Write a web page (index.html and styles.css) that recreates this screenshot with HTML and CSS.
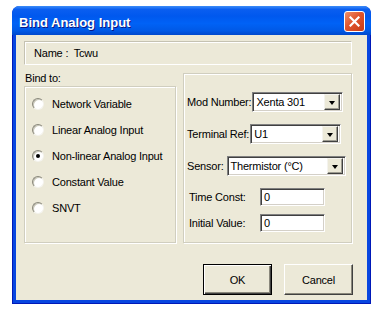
FILE: index.html
```html
<!DOCTYPE html>
<html lang="en">
<head>
    <meta charset="UTF-8">
    <title>Bind Analog Input</title>
    <link rel="stylesheet" href="styles.css">
</head>
<body>
    <div class="window">
        <div class="titlebar">
            <span class="title">Bind Analog Input</span>
            <span class="close">
                <svg width="11" height="11" viewBox="0 0 11 11"><path d="M1.5 1.5 L9.5 9.5 M9.5 1.5 L1.5 9.5" stroke="#fff" stroke-width="2.2" stroke-linecap="square"/></svg>
            </span>
        </div>
        <div class="client">
            <div class="name-box">Name :&nbsp; Tcwu</div>

            <div class="columns">
                <div class="bind-col">
                    <div class="caption">Bind to:</div>
                    <div class="group bind-group">
                        <div class="radio-row"><span class="radio"></span>Network Variable</div>
                        <div class="radio-row"><span class="radio"></span>Linear Analog Input</div>
                        <div class="radio-row"><span class="radio checked"></span>Non-linear Analog Input</div>
                        <div class="radio-row"><span class="radio"></span>Constant Value</div>
                        <div class="radio-row"><span class="radio"></span>SNVT</div>
                    </div>
                </div>

                <div class="group params">
                    <div class="combo-row">
                        <span class="lbl">Mod Number:</span>
                        <div class="combo combo-mod"><span class="value">Xenta 301</span><span class="drop"></span></div>
                    </div>
                    <div class="combo-row">
                        <span class="lbl">Terminal Ref:</span>
                        <div class="combo combo-mod"><span class="value">U1</span><span class="drop"></span></div>
                    </div>
                    <div class="combo-row">
                        <span class="lbl sensor-lbl">Sensor:</span>
                        <div class="combo combo-sensor"><span class="value">Thermistor (°C)</span><span class="drop"></span></div>
                    </div>
                    <div class="edit-row first-edit">
                        <span class="edit-lbl">Time Const:</span>
                        <div class="edit">0</div>
                    </div>
                    <div class="edit-row">
                        <span class="edit-lbl">Initial Value:</span>
                        <div class="edit">0</div>
                    </div>
                </div>
            </div>

            <div class="actions">
                <button class="btn btn-default">OK</button>
                <button class="btn">Cancel</button>
            </div>
        </div>
    </div>
</body>
</html>
```

FILE: styles.css
```css
/* XP style dialog */
body {
    margin: 0;
    background: #fff;
    font-family: 'Liberation Sans', Arial, sans-serif;
    font-size: 11px;
    letter-spacing: -0.2px;
    color: #000;
}

.window {
    margin: 6px 0 0 12px;
    width: 359px;
    height: 298px;
    box-sizing: border-box;
    background: #0846e0;
    border: 1px solid #0019b8;
    border-top: none;
    border-radius: 8px 8px 0 0;
    display: flex;
    flex-direction: column;
}

.titlebar {
    height: 29px;
    margin: 0 -1px;
    border-radius: 7px 7px 0 0;
    background: linear-gradient(#3c8cf8 0%, #0a5ef0 12%, #0058ee 35%, #0062f6 60%, #0059e6 85%, #0048cc 100%);
    display: flex;
    align-items: center;
    padding: 0 6px 0 7px;
}

.title {
    flex: 1;
    color: #fff;
    font-size: 13px;
    font-weight: bold;
    letter-spacing: 0;
    text-shadow: 1px 1px 0 #0a1883;
    padding-top: 3px;
}

.close {
    width: 19px;
    height: 19px;
    border: 1px solid #fff;
    border-radius: 3px;
    background: linear-gradient(135deg, #f0906a 0%, #e0552e 45%, #c73a14 100%);
    display: flex;
    align-items: center;
    justify-content: center;
    margin-top: 2px;
}

.client {
    flex: 1;
    margin: 0 3px 3px;
    background: #ece9d8;
    padding: 6px 15px 5px 8px;
    display: flex;
    flex-direction: column;
}

.name-box {
    height: 24px;
    box-sizing: border-box;
    border: 1px solid;
    border-color: #c5c2b2 #fff #fff #c5c2b2;
    box-shadow: 1px 1px 0 #fff inset;
    padding-left: 9px;
    display: flex;
    align-items: center;
}

.columns {
    display: flex;
    gap: 7px;
    margin-top: 8px;
    height: 170px;
}

.bind-col {
    width: 152px;
    display: flex;
    flex-direction: column;
}

.caption {
    height: 13px;
    line-height: 10px;
    padding-left: 1px;
}

.group {
    box-sizing: border-box;
    border: 1px solid #d0cebf;
    box-shadow: inset 1px 1px 0 #fff, 1px 1px 0 #fff;
}

.bind-group {
    flex: 1;
    padding: 4px 0 0 7px;
}

.radio-row {
    height: 26px;
    display: flex;
    align-items: center;
}

.radio {
    width: 12px;
    height: 12px;
    box-sizing: border-box;
    border-radius: 50%;
    border: 1px solid;
    border-color: #8a887c #f4f3ee #f4f3ee #8a887c;
    box-shadow: inset 1px 1px 0 #c8c6b8;
    background: radial-gradient(circle at 65% 65%, #fff 50%, #f0efe8 100%);
    margin-right: 8px;
    position: relative;
}

.radio.checked::after {
    content: "";
    position: absolute;
    left: 3px;
    top: 3px;
    width: 4px;
    height: 4px;
    border-radius: 50%;
    background: #000;
}

.params {
    flex: 1;
    padding: 18px 0 0 3px;
}

.combo-row {
    display: flex;
    align-items: center;
    height: 20px;
    margin-bottom: 12px;
}

.lbl {
    margin-right: 1px;
}

.sensor-lbl {
    margin-right: 3px;
}

.combo {
    height: 20px;
    box-sizing: border-box;
    background: #fff;
    border: 1px solid;
    border-color: #808080 #fff #fff #808080;
    box-shadow: inset 1px 1px 0 #404040, inset -1px -1px 0 #d4d0c8;
    display: flex;
    align-items: center;
    padding: 2px;
}

.combo-mod {
    width: 91px;
}

.combo-sensor {
    width: 119px;
}

.value {
    flex: 1;
    padding-left: 1px;
}

.drop {
    width: 16px;
    height: 16px;
    box-sizing: border-box;
    background: #ece9d8;
    border: 1px solid;
    border-color: #f4f3ee #404040 #404040 #f4f3ee;
    box-shadow: inset -1px -1px 0 #9d9b90;
    display: flex;
    align-items: center;
    justify-content: center;
}

.drop::after {
    content: "";
    border-left: 3.5px solid transparent;
    border-right: 3.5px solid transparent;
    border-top: 4px solid #000;
    margin-top: 1px;
}

.edit-row {
    display: flex;
    align-items: center;
    height: 18px;
    padding-left: 2px;
    margin-bottom: 8px;
}

.first-edit {
    margin-top: 2px;
}

.edit-lbl {
    width: 71px;
}

.edit {
    width: 65px;
    height: 18px;
    box-sizing: border-box;
    background: #fff;
    border: 1px solid;
    border-color: #808080 #fff #fff #808080;
    box-shadow: inset 1px 1px 0 #404040, inset -1px -1px 0 #d4d0c8;
    padding: 2px 0 0 3px;
}

.actions {
    display: flex;
    justify-content: flex-end;
    gap: 12px;
    margin-top: 21px;
    margin-right: -1px;
}

.btn {
    width: 69px;
    height: 31px;
    font-family: 'Liberation Sans', Arial, sans-serif;
    font-size: 11px;
    letter-spacing: -0.2px;
    color: #000;
    background: #ece9d8;
    border: 1px solid;
    border-color: #fff #404040 #404040 #fff;
    box-shadow: inset -1px -1px 0 #8a887c;
    padding: 0;
}

.btn-default {
    border: 1px solid #000;
    box-shadow: inset 1px 1px 0 #fff, inset -1px -1px 0 #404040, inset -2px -2px 0 #8a887c;
}
```
